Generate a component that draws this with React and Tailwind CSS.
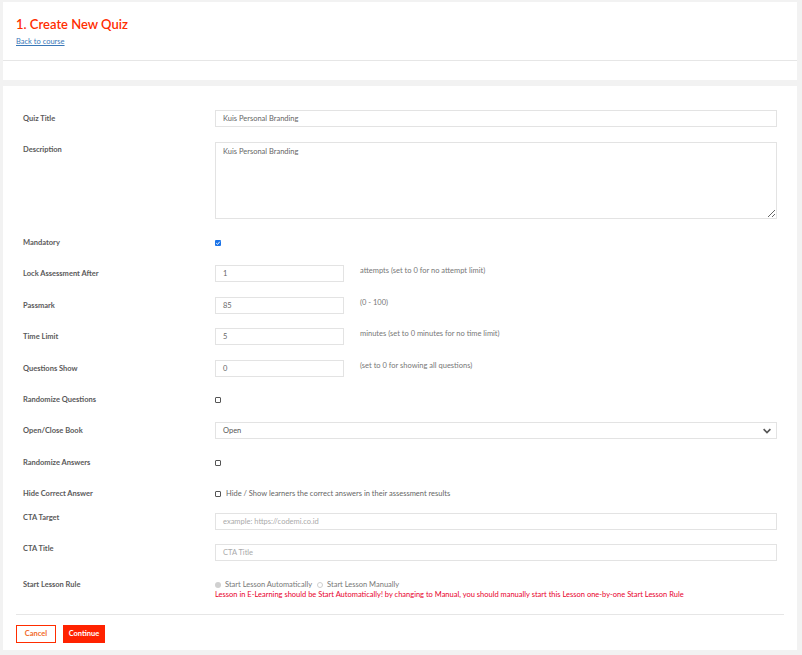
import React from "react";

const font = { fontFamily: "Lato, 'Open Sans', sans-serif" };

function Label({ children, className = "" }) {
  return (
    <div className={`w-[192px] shrink-0 text-[7.5px] font-bold text-[#5a5a5a] ${className}`}>
      {children}
    </div>
  );
}

function Box({ checked }) {
  if (checked) {
    return (
      <span className="inline-flex h-[6px] w-[6px] items-center justify-center rounded-[1px] bg-[#1a73e8]">
        <svg viewBox="0 0 10 10" className="h-[6px] w-[6px]">
          <path d="M2 5.2 L4.2 7.3 L8 2.8" fill="none" stroke="#fff" strokeWidth="1.6" />
        </svg>
      </span>
    );
  }
  return <span className="inline-block h-[6px] w-[6px] rounded-[1px] border border-[#555] bg-white" />;
}

function TextInput({ value, placeholder, small }) {
  return (
    <div
      className={`flex h-[17px] items-center border border-[#e3e3e3] bg-white px-[7px] text-[7.5px] ${
        small ? "w-[129px]" : "flex-1"
      } ${value ? "text-[#666]" : "text-[#aaa]"}`}
    >
      {value || placeholder}
    </div>
  );
}

function NumberRow({ label, value, hint, className }) {
  return (
    <div className={`flex items-center ${className}`}>
      <Label>{label}</Label>
      <TextInput value={value} small />
      <div className="ml-[16px] self-start text-[7.5px] text-[#777]">{hint}</div>
    </div>
  );
}

function CheckRow({ label, checked, className, children }) {
  return (
    <div className={`flex h-[17px] items-center ${className}`}>
      <Label>{label}</Label>
      <Box checked={checked} />
      {children}
    </div>
  );
}

export default function App() {
  return (
    <div className="min-h-[655px] bg-[#f2f2f2] pl-[3px] pr-[5px] pt-[2px]" style={font}>
      <div className="bg-white">
        <div className="px-[13px] pt-[13px] pb-[13px]">
          <div className="text-[13px] font-semibold leading-[18px] text-[#ff2d00]">1. Create New Quiz</div>
          <a href="#" className="mt-[4px] block text-[7.5px] leading-[10px] text-[#3a78b8] underline">
            Back to course
          </a>
        </div>
        <div className="border-t border-[#e6e6e6]" />
        <div className="h-[19px]" />
      </div>

      <div className="mt-[6px] bg-white px-[13px] pt-[24px] pb-[7px]">
        <div className="px-[7px]">
          <div className="flex items-center">
            <Label>Quiz Title</Label>
            <TextInput value="Kuis Personal Branding" />
          </div>

          <div className="mt-[15px] flex">
            <Label className="pt-[2px]">Description</Label>
            <textarea
              readOnly
              defaultValue="Kuis Personal Branding"
              className="h-[77px] flex-1 border border-[#e3e3e3] bg-white px-[7px] py-[3px] text-[7.5px] text-[#666] outline-none"
              style={font}
            />
          </div>

          <CheckRow label="Mandatory" checked className="mt-[15px]" />

          <NumberRow label="Lock Assessment After" value="1" hint="attempts (set to 0 for no attempt limit)" className="mt-[14px]" />
          <NumberRow label="Passmark" value="85" hint="(0 - 100)" className="mt-[15px]" />
          <NumberRow label="Time Limit" value="5" hint="minutes (set to 0 minutes for no time limit)" className="mt-[14px]" />
          <NumberRow label="Questions Show" value="0" hint="(set to 0 for showing all questions)" className="mt-[15px]" />

          <CheckRow label="Randomize Questions" className="mt-[14px]" />

          <div className="mt-[14px] flex items-center">
            <Label>Open/Close Book</Label>
            <div className="flex h-[17px] flex-1 items-center justify-between border border-[#e3e3e3] bg-white pl-[7px] pr-[4px] text-[7.5px] text-[#555]">
              <span>Open</span>
              <svg viewBox="0 0 12 8" className="h-[6px] w-[10px]">
                <path d="M1.5 1.5 L6 6 L10.5 1.5" fill="none" stroke="#555" strokeWidth="2.2" />
              </svg>
            </div>
          </div>

          <CheckRow label="Randomize Answers" className="mt-[15px]" />

          <CheckRow label="Hide Correct Answer" className="mt-[14px]">
            <span className="ml-[5px] text-[7.5px] text-[#666]">
              Hide / Show learners the correct answers in their assessment results
            </span>
          </CheckRow>

          <div className="mt-[11px] flex items-start">
            <Label className="leading-[10px]">CTA Target</Label>
            <TextInput placeholder="example: https://codemi.co.id" />
          </div>

          <div className="mt-[14px] flex items-start">
            <Label className="leading-[10px]">CTA Title</Label>
            <TextInput placeholder="CTA Title" />
          </div>

          <div className="mt-[19px] flex items-start">
            <Label className="leading-[10px]">Start Lesson Rule</Label>
            <div className="flex-1">
              <div className="flex h-[10px] items-center text-[7.5px] text-[#777]">
                <span className="inline-block h-[6px] w-[6px] rounded-full bg-[#d0d0d0]" />
                <span className="ml-[4px]">Start Lesson Automatically</span>
                <span className="ml-[5px] inline-block h-[6px] w-[6px] rounded-full border border-[#cfcfcf] bg-white" />
                <span className="ml-[4px]">Start Lesson Manually</span>
              </div>
              <div className="text-[7.5px] leading-[10px] text-[#e8002d]">
                Lesson in E-Learning should be Start Automatically! by changing to Manual, you should manually start this Lesson one-by-one Start Lesson Rule
              </div>
            </div>
          </div>
        </div>

        <div className="mt-[14px] border-t border-[#e6e6e6]" />

        <div className="mt-[10px] flex gap-[7px]">
          <button className="flex h-[18px] w-[40px] items-center justify-center border border-[#ff2d00] bg-white text-[7.5px] font-bold text-[#f26a2a]">
            Cancel
          </button>
          <button className="flex h-[18px] w-[42px] items-center justify-center bg-[#ff2200] text-[7.5px] font-bold text-white">
            Continue
          </button>
        </div>
      </div>
    </div>
  );
}
